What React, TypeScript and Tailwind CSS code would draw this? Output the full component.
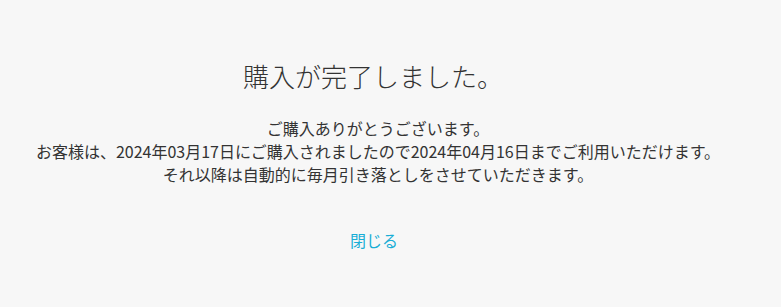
export default function App() {
  return (
    <div
      className="min-h-[307px] w-full bg-[#f7f7f7] text-[#333333]"
      style={{ fontFamily: '"Noto Sans CJK JP", "Noto Sans", sans-serif' }}
    >
      <div className="flex w-[756px] flex-col items-center pt-[59px] text-center">
        <h1 className="pr-[10px] text-[26px] leading-[34px] font-light">
          購入が完了しました。
        </h1>

        <div className="mt-[24px] text-[16px] leading-[23px]">
          <p>ご購入ありがとうございます。</p>
          <p>
            お客様は、2024年03月17日にご購入されましたので2024年04月16日までご利用いただけます。
          </p>
          <p>それ以降は自動的に毎月引き落としをさせていただきます。</p>
        </div>

        <button
          type="button"
          className="mt-[43px] pr-[8px] text-[16px] leading-[23px] text-[#1aaed6]"
        >
          閉じる
        </button>
      </div>
    </div>
  );
}
